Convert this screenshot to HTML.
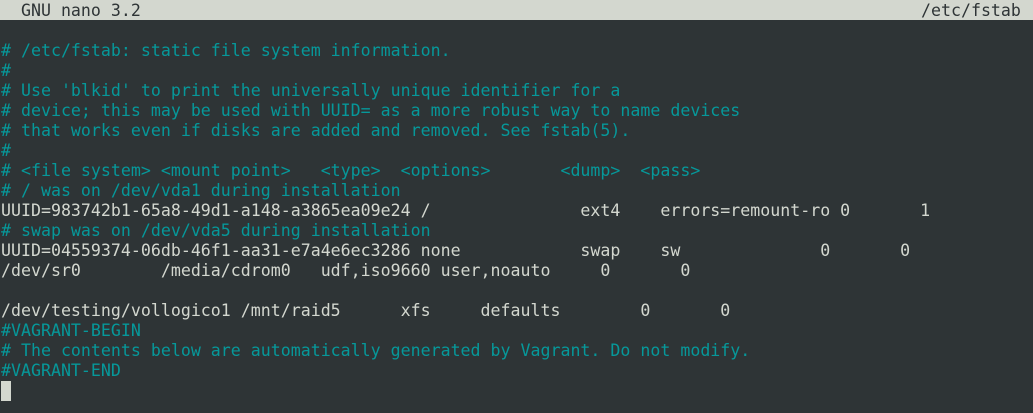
<!DOCTYPE html>
<html><head><style>
html,body{margin:0;padding:0;background:#2e3436;width:1033px;height:413px;overflow:hidden}
pre{margin:0;font-family:"DejaVu Sans Mono","Liberation Mono",monospace;font-size:16.6px;line-height:20px;color:#d3d7cf;position:absolute;left:1px;top:0;white-space:pre}
.t{position:absolute;left:0;top:0;width:1033px;height:20px;background:#d3d7cf;overflow:hidden}
.t pre{color:#2e3436;top:1px}
.c{color:#06989a}
.cur{position:absolute;left:1px;top:381px;width:10px;height:20px;background:#d3d7cf}
</style></head><body>
<div class="t"><pre>  GNU nano 3.2</pre><pre style="left:921px">/etc/fstab</pre></div>
<pre style="top:41px"><span class="c"># /etc/fstab: static file system information.
#
# Use 'blkid' to print the universally unique identifier for a
# device; this may be used with UUID= as a more robust way to name devices
# that works even if disks are added and removed. See fstab(5).
#
# &lt;file system&gt; &lt;mount point&gt;   &lt;type&gt;  &lt;options&gt;       &lt;dump&gt;  &lt;pass&gt;
# / was on /dev/vda1 during installation</span>
UUID=983742b1-65a8-49d1-a148-a3865ea09e24 /               ext4    errors=remount-ro 0       1
<span class="c"># swap was on /dev/vda5 during installation</span>
UUID=04559374-06db-46f1-aa31-e7a4e6ec3286 none            swap    sw              0       0
/dev/sr0        /media/cdrom0   udf,iso9660 user,noauto     0       0

/dev/testing/vollogico1 /mnt/raid5      xfs     defaults        0       0
<span class="c">#VAGRANT-BEGIN
# The contents below are automatically generated by Vagrant. Do not modify.
#VAGRANT-END</span>
</pre>
<div class="cur"></div>
</body></html>
